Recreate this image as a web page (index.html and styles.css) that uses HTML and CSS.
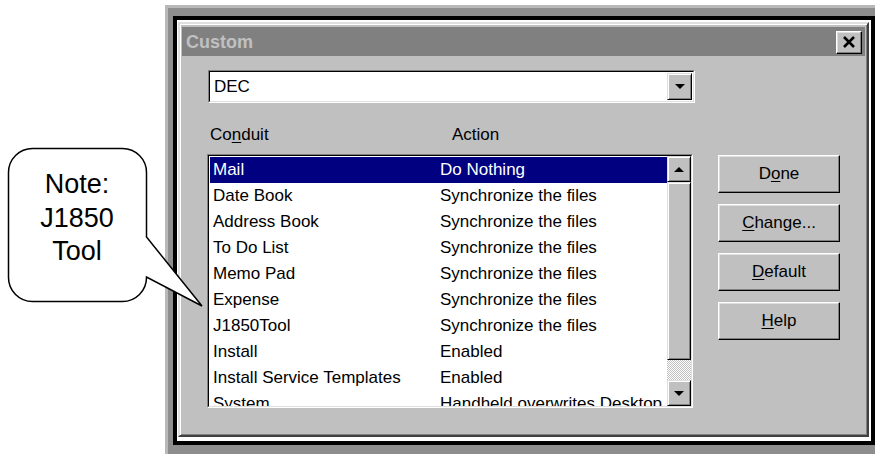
FILE: index.html
```html
<!DOCTYPE html>
<html lang="en">
<head>
<meta charset="utf-8">
<title>Custom</title>
<link rel="stylesheet" href="styles.css">
</head>
<body>
<div class="page">
  <!-- speech-bubble note pointing at the J1850Tool conduit -->
  <div class="callout">
    <svg class="callout-shape" width="210" height="180" viewBox="0 140 210 180">
      <path d="M32.5 148.5 H122.5 A24 24 0 0 1 146.5 172.5 V237 L202 306 L146.5 277 V277.5 A24 24 0 0 1 122.5 301.5 H32.5 A24 24 0 0 1 8.5 277.5 V172.5 A24 24 0 0 1 32.5 148.5 Z" fill="#fff" stroke="#000" stroke-width="1.5" stroke-linejoin="miter"/>
    </svg>
    <div class="callout-text">Note:<br>J1850<br>Tool</div>
  </div>

  <div class="frame">
    <div class="matte">
      <div class="dialog">
        <div class="titlebar">
          <span class="title">Custom</span>
          <button class="close" type="button" aria-label="Close">
            <svg width="14" height="12" viewBox="0 0 14 12"><path d="M2 1 L12 11 M12 1 L2 11" stroke="#000" stroke-width="2.6" fill="none"/></svg>
          </button>
        </div>
        <div class="content">
          <div class="main">
            <div class="combo">
              <div class="combo-inner">
                <span class="combo-text">DEC</span>
                <span class="bevel drop"><span class="arrow-down"></span></span>
              </div>
            </div>
            <div class="headers">
              <span class="col-a">Co<u>n</u>duit</span>
              <span class="col-b">Action</span>
            </div>
            <div class="listbox">
              <div class="listbox-inner">
                <div class="rows">
                  <div class="row sel"><span class="c1">Mail</span><span class="c2">Do Nothing</span></div>
                  <div class="row"><span class="c1">Date Book</span><span class="c2">Synchronize the files</span></div>
                  <div class="row"><span class="c1">Address Book</span><span class="c2">Synchronize the files</span></div>
                  <div class="row"><span class="c1">To Do List</span><span class="c2">Synchronize the files</span></div>
                  <div class="row"><span class="c1">Memo Pad</span><span class="c2">Synchronize the files</span></div>
                  <div class="row"><span class="c1">Expense</span><span class="c2">Synchronize the files</span></div>
                  <div class="row"><span class="c1">J1850Tool</span><span class="c2">Synchronize the files</span></div>
                  <div class="row"><span class="c1">Install</span><span class="c2">Enabled</span></div>
                  <div class="row"><span class="c1">Install Service Templates</span><span class="c2">Enabled</span></div>
                  <div class="row"><span class="c1">System</span><span class="c2">Handheld overwrites Desktop</span></div>
                </div>
                <div class="scrollbar">
                  <span class="bevel sb-btn"><span class="arrow-up"></span></span>
                  <span class="bevel sb-thumb"></span>
                  <span class="sb-track"></span>
                  <span class="bevel sb-btn"><span class="arrow-down"></span></span>
                </div>
              </div>
            </div>
          </div>
          <div class="buttons">
            <button class="btn" type="button">D<u>o</u>ne</button>
            <button class="btn" type="button"><u>C</u>hange...</button>
            <button class="btn" type="button"><u>D</u>efault</button>
            <button class="btn" type="button"><u>H</u>elp</button>
          </div>
        </div>
      </div>
    </div>
  </div>
</div>
</body>
</html>
```

FILE: styles.css
```css
* { box-sizing: border-box; }

html, body {
  margin: 0;
  background: #fff;
}

body {
  font-family: "Liberation Sans", Arial, sans-serif;
  color: #000;
}

.page {
  position: relative;
  width: 877px;
  height: 454px;
  padding: 5px 0 0 165px;
  overflow: hidden;
}

/* ---------- note bubble ---------- */
.callout-shape {
  position: absolute;
  left: 0;
  top: 140px;
}

.callout-text {
  position: absolute;
  left: 8px;
  top: 168px;
  width: 138px;
  text-align: center;
  font-size: 27px;
  line-height: 33.5px;
}

/* ---------- picture frame around the dialog ---------- */
.frame {
  width: 710px;
  height: 449px;
  background: #8e8e8e;
  border-top: 3px solid #b9b9b9;
  border-left: 3px solid #b9b9b9;
  padding: 8px 0 9px 5px;
}

.matte {
  width: 702px;
  height: 429px;
  border: 4px solid #000;
  background: #fff;
  padding: 2px 2px 4px 1px;
}

/* ---------- dialog window ---------- */
.dialog {
  width: 100%;
  height: 100%;
  display: flex;
  flex-direction: column;
  background: #c0c0c0;
  border: 2px solid;
  border-color: #dfdfdf #404040 #404040 #dfdfdf;
  box-shadow: inset 1px 1px #fff, inset -1px -1px #808080;
  padding: 3px 2px 2px;
}

.titlebar {
  height: 29px;
  flex: none;
  display: flex;
  align-items: center;
  justify-content: space-between;
  background: #808080;
  padding: 1px 3px 0 4px;
}

.title {
  color: #c0c0c0;
  font-weight: bold;
  font-size: 18px;
}

.close {
  width: 26px;
  height: 23px;
  padding: 0;
  display: flex;
  align-items: center;
  justify-content: center;
  background: #c0c0c0;
  border: 1px solid;
  border-color: #fff #000 #000 #fff;
  box-shadow: inset -1px -1px #808080, inset 1px 1px #dfdfdf;
}

.content {
  flex: 1;
  display: flex;
  padding: 14px 0 0 25px;
}

.main {
  width: 488px;
}

/* raised 3D face used by scroll arrows and thumb */
.bevel {
  display: flex;
  align-items: center;
  justify-content: center;
  background: #c0c0c0;
  border: 1px solid;
  border-color: #dfdfdf #000 #000 #dfdfdf;
  box-shadow: inset 1px 1px #fff, inset -1px -1px #808080;
}

.arrow-down,
.arrow-up {
  width: 0;
  height: 0;
  border-left: 5px solid transparent;
  border-right: 5px solid transparent;
}
.arrow-down { border-top: 5px solid #000; }
.arrow-up { border-bottom: 5px solid #000; }

/* ---------- combo box ---------- */
.combo {
  margin-left: 1px;
  width: 487px;
  height: 33px;
  border: 1px solid;
  border-color: #808080 #fff #fff #808080;
}

.combo-inner {
  height: 100%;
  display: flex;
  padding: 1px;
  background: #fff;
  border: 1px solid;
  border-color: #000 #dfdfdf #dfdfdf #000;
}

.combo-text {
  flex: 1;
  padding-left: 3px;
  font-size: 17px;
  line-height: 27px;
}

.drop {
  width: 25px;
}

/* ---------- column headers ---------- */
.headers {
  height: 51px;
  display: flex;
  align-items: flex-end;
  padding-bottom: 9px;
  font-size: 17px;
  line-height: 20px;
}

.col-a {
  width: 245px;
  padding-left: 3px;
}

u {
  text-decoration-thickness: 1px;
  text-underline-offset: 2px;
}

/* ---------- list box ---------- */
.listbox {
  width: 486px;
  height: 254px;
  border: 1px solid;
  border-color: #808080 #fff #fff #808080;
}

.listbox-inner {
  height: 100%;
  display: flex;
  background: #fff;
  border: 1px solid;
  border-color: #000 #dfdfdf #dfdfdf #000;
}

.rows {
  flex: 1;
  min-width: 0;
  overflow: hidden;
  padding: 1px 0 0 1px;
}

.row {
  height: 26px;
  display: flex;
  align-items: center;
  white-space: nowrap;
  font-size: 17px;
}

.row .c1 {
  width: 230px;
  flex: none;
  padding-left: 3px;
}

.row.sel {
  background: #000080;
  color: #fff;
}

.scrollbar {
  width: 24px;
  flex: none;
  display: flex;
  flex-direction: column;
}

.sb-btn {
  height: 26px;
  flex: none;
}

.sb-thumb {
  height: 178px;
  flex: none;
}

.sb-track {
  flex: 1;
  background: repeating-conic-gradient(#c0c0c0 0 25%, #fff 0 50%) 0 0 / 2px 2px;
}

/* ---------- push buttons ---------- */
.buttons {
  margin-left: 23px;
  padding-top: 85px;
  display: flex;
  flex-direction: column;
  gap: 11px;
}

.btn {
  width: 122px;
  height: 38px;
  padding: 0;
  font-family: "Liberation Sans", Arial, sans-serif;
  font-size: 17px;
  color: #000;
  background: #c0c0c0;
  border: 1px solid;
  border-color: #fff #000 #000 #fff;
  box-shadow: inset -1px -1px #808080, inset 1px 1px #dfdfdf;
}
```
